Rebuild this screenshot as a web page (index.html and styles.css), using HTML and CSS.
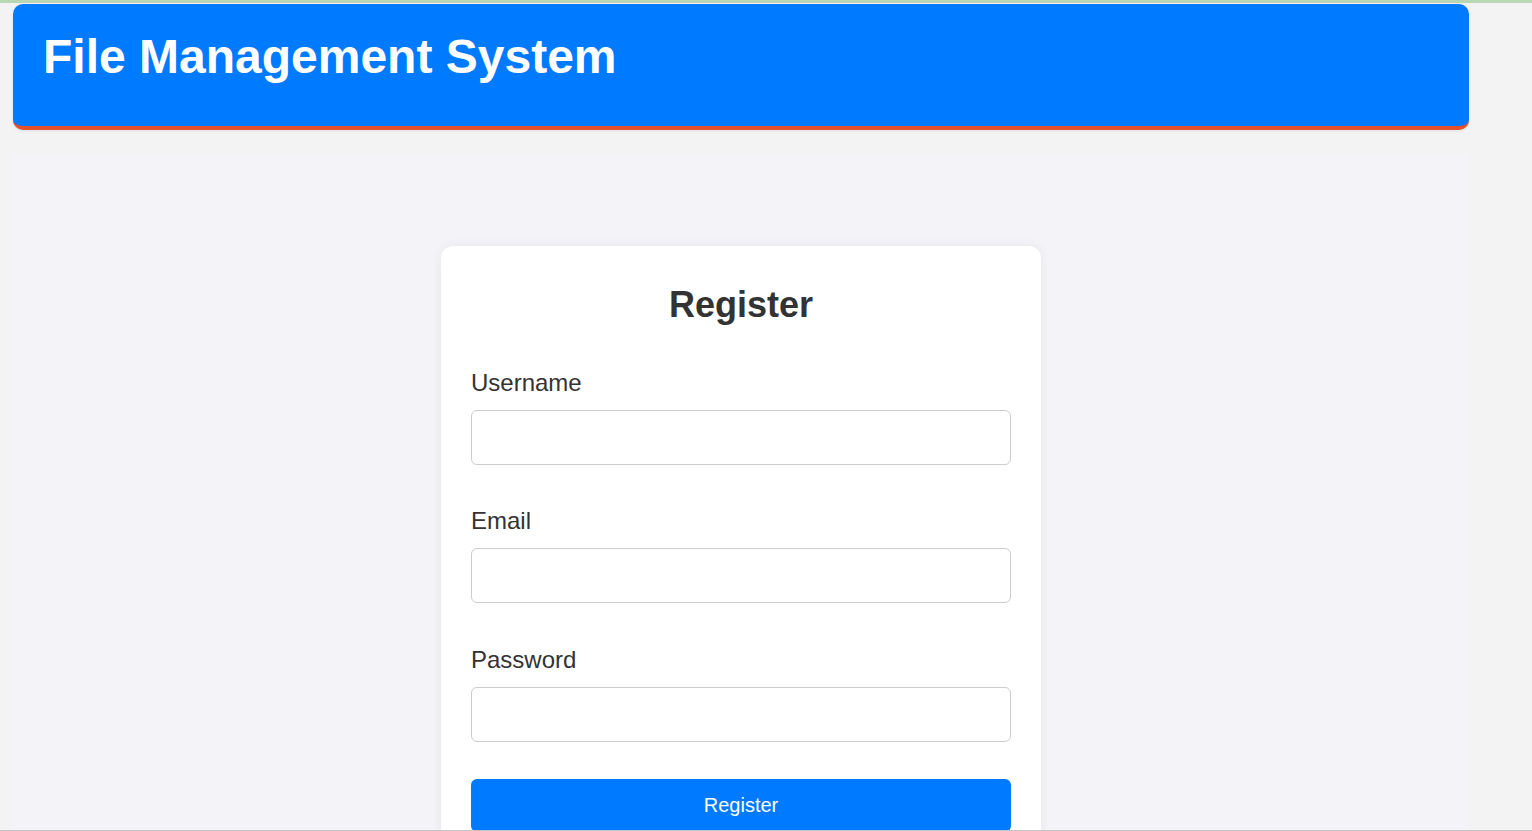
FILE: index.html
```html
<!DOCTYPE html>
<html lang="en">
<head>
<meta charset="utf-8">
<title>File Management System - Register</title>
<link rel="stylesheet" href="styles.css">
</head>
<body>
<div class="topline"></div>
<div class="page">
  <header class="site-header">
    <h1 class="site-title">File Management System</h1>
  </header>
  <main class="main">
    <form class="card">
      <h2 class="card-title">Register</h2>
      <div class="field">
        <label class="field-label" for="username">Username</label>
        <input class="field-input" type="text" id="username">
      </div>
      <div class="field field-mid">
        <label class="field-label" for="email">Email</label>
        <input class="field-input" type="email" id="email">
      </div>
      <div class="field field-last">
        <label class="field-label" for="password">Password</label>
        <input class="field-input" type="password" id="password">
      </div>
      <button class="btn" type="button">Register</button>
    </form>
  </main>
</div>
<div class="bottomline"></div>
</body>
</html>
```
FILE: styles.css
```css
html, body {
  margin: 0;
  padding: 0;
  background: #f3f3f3;
  font-family: "Liberation Sans", Arial, sans-serif;
  color: #333;
  overflow: hidden;
  height: 831px;
}

.topline {
  height: 3px;
  background: #b9d6b5;
}

.page {
  width: 1456px;
  margin: 1px 0 0 13px;
}

.site-header {
  background: #007bff;
  color: #fff;
  border-radius: 10px;
  border-bottom: 4px solid #e4502a;
  padding: 25px 30px 42px 30px;
  box-shadow: 0 1px 3px rgba(0, 0, 0, 0.08);
}

.site-title {
  margin: 0;
  font-size: 48px;
  font-weight: bold;
  line-height: 55px;
}

.main {
  margin-top: 25px;
  background: #f4f4f8;
  padding-top: 91px;
  min-height: 700px;
  display: flex;
  flex-direction: column;
  align-items: center;
}

.card {
  width: 600px;
  box-sizing: border-box;
  background: #fff;
  border-radius: 12px;
  padding: 38px 30px 30px;
  box-shadow: 0 0 12px rgba(0, 0, 0, 0.06);
  display: flex;
  flex-direction: column;
}

.card-title {
  margin: 0 0 44px;
  font-size: 36px;
  line-height: 41px;
  font-weight: bold;
  text-align: center;
  color: #333;
}

.field {
  display: flex;
  flex-direction: column;
  margin-bottom: 42px;
}

.field-mid {
  margin-bottom: 43px;
}

.field-last {
  margin-bottom: 37px;
}

.field-label {
  font-size: 24px;
  line-height: 28px;
  margin-bottom: 13px;
  color: #333;
}

.field-input {
  height: 55px;
  box-sizing: border-box;
  border: 1px solid #ccc;
  border-radius: 6px;
  font-size: 20px;
  padding: 0 14px;
  background: #fff;
}

.btn {
  height: 53px;
  border: none;
  border-radius: 6px;
  background: #007bff;
  color: #fff;
  font-family: "Liberation Sans", Arial, sans-serif;
  font-size: 20px;
  padding: 15px;
}

.bottomline {
  position: fixed;
  left: 0;
  right: 0;
  bottom: 0;
  height: 1px;
  background: #c4c4c4;
}
```
